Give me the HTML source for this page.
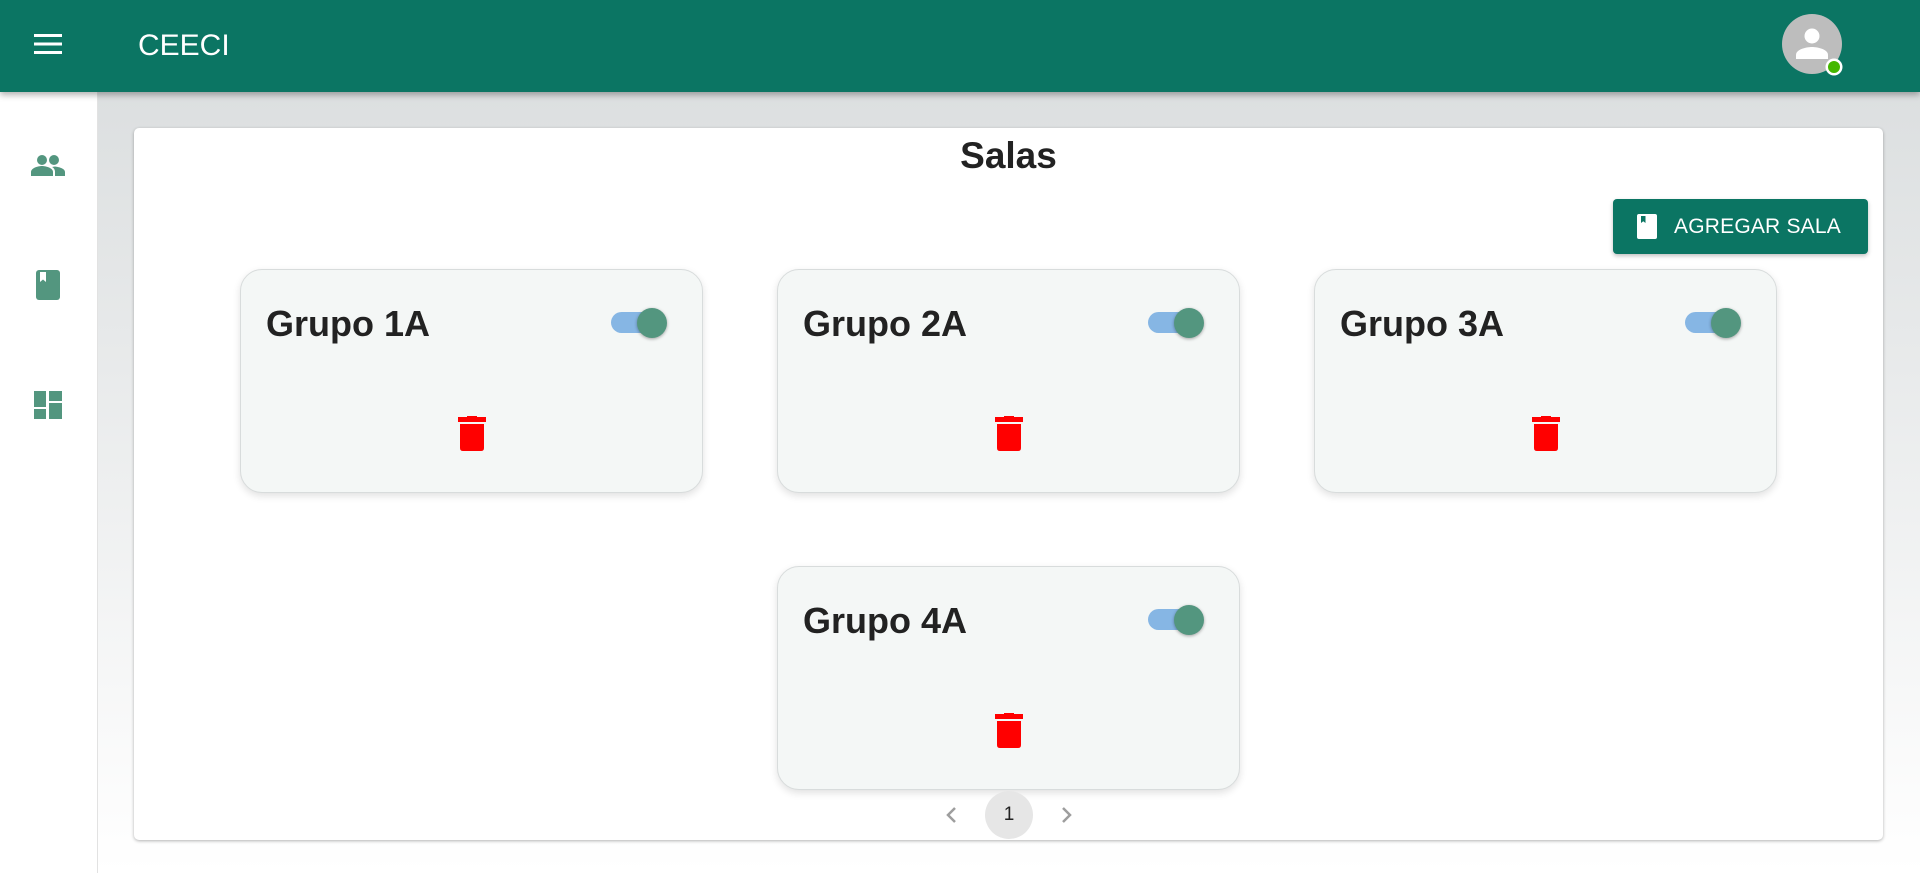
<!DOCTYPE html>
<html><head><meta charset="utf-8">
<style>
*{margin:0;padding:0;box-sizing:border-box}
body{width:1920px;height:873px;overflow:hidden;font-family:"Liberation Sans",Arial,sans-serif;background:#fff;position:relative}
.header{position:absolute;left:0;top:0;width:1920px;height:92px;background:#0b7563;box-shadow:0 3px 6px rgba(0,0,0,.3);z-index:5}
.title{position:absolute;left:138px;top:29px;color:#fff;font-size:30px}
.side{position:absolute;left:0;top:92px;width:98px;height:781px;background:#fff;border-right:1px solid #e2e2e2}
.main{position:absolute;left:98px;top:92px;width:1822px;height:781px;background:linear-gradient(#dcdfe0,#ffffff)}
.paper{position:absolute;left:134px;top:128px;width:1749px;height:712px;background:#fff;border-radius:5px;box-shadow:0 1px 3px rgba(0,0,0,.3)}
.h{position:absolute;left:0;width:100%;top:7px;text-align:center;font-size:37px;font-weight:bold;color:#222}
.btn{position:absolute;left:1479px;top:71px;width:255px;height:55px;background:#0b7563;border-radius:4px;color:#fff;font-size:21px;box-shadow:0 2px 4px rgba(0,0,0,.25)}
.btn span{position:absolute;left:61px;top:16px;letter-spacing:.2px}
.card{position:absolute;width:463px;height:224px;background:#f4f7f6;border:1px solid #d8dcdc;border-radius:22px;box-shadow:0 3px 8px rgba(0,0,0,.12)}
.card .t{position:absolute;left:25px;top:33px;font-size:36px;font-weight:bold;color:#222}
.tr{position:absolute;left:370px;top:42px;width:46px;height:21px;border-radius:11px;background:#86b6e4}
.th{position:absolute;left:396px;top:38px;width:30px;height:30px;border-radius:50%;background:#53967f;box-shadow:0 1px 3px rgba(0,0,0,.35)}
.trash{position:absolute;left:217px;top:146px}
</style></head><body>
<div class="header">
  <svg style="position:absolute;left:34px;top:34px" width="28" height="20"><rect x="0" y="0" width="28" height="3" fill="#fff"/><rect x="0" y="8.5" width="28" height="3" fill="#fff"/><rect x="0" y="17" width="28" height="3" fill="#fff"/></svg>
  <div class="title">CEECI</div>
  <svg style="position:absolute;left:1780px;top:13px" width="70" height="70">
    <circle cx="32" cy="31" r="30" fill="#bdbdbd"/>
    <circle cx="32" cy="23" r="7.5" fill="#fff"/>
    <path d="M16 46 V42 C16 36 27 34 32 34 C37 34 48 36 48 42 V46 Z" fill="#fff"/>
    <circle cx="54" cy="54" r="8.5" fill="#fff"/>
    <circle cx="54" cy="54" r="6" fill="#44b700"/>
  </svg>
</div>
<div class="side">
  <svg style="position:absolute;left:31px;top:62px" width="34" height="22" viewBox="0 0 34 22"><circle cx="11" cy="6" r="5" fill="#53967f"/><circle cx="23" cy="6" r="5" fill="#53967f"/><path d="M0 22 V18 C0 14 7 12 11 12 C15 12 22 14 22 18 V22Z" fill="#53967f"/><path d="M24 12.5 C28 13 34 14.5 34 18 V22 H24 V18 C24 16 23 14 21 13 Z" fill="#53967f"/></svg>
  <svg style="position:absolute;left:36px;top:178px" width="24" height="30"><rect x="0" y="0" width="24" height="30" rx="3" fill="#53967f"/><path d="M4 2 H10 V12 L7 9.5 L4 12Z" fill="#fff"/></svg>
  <svg style="position:absolute;left:34px;top:299px" width="28" height="28"><rect x="0" y="0" width="12" height="16" fill="#53967f"/><rect x="0" y="18" width="12" height="10" fill="#53967f"/><rect x="15" y="0" width="13" height="10" fill="#53967f"/><rect x="15" y="12" width="13" height="16" fill="#53967f"/></svg>
</div>
<div class="main"></div>
<div class="paper">
  <div class="h">Salas</div>
  <div class="btn">
    <svg style="position:absolute;left:24px;top:15px" width="20" height="25"><rect x="0" y="0" width="20" height="25" rx="2" fill="#fff"/><path d="M4 2 H8.5 V9 L6.25 7.2 L4 9Z" fill="#0b7563"/></svg>
    <span>AGREGAR SALA</span>
  </div>
</div>

<div class="card" style="left:240px;top:269px"><div class="t">Grupo 1A</div><div class="tr"></div><div class="th"></div>
<svg class="trash" width="28" height="36"><rect x="0" y="1" width="28" height="5" fill="#f00"/><rect x="9" y="0" width="10" height="3" fill="#f00"/><path d="M2 8 H26 V32 Q26 35 23 35 H5 Q2 35 2 32Z" fill="#f00"/></svg></div>
<div class="card" style="left:777px;top:269px"><div class="t">Grupo 2A</div><div class="tr"></div><div class="th"></div>
<svg class="trash" width="28" height="36"><rect x="0" y="1" width="28" height="5" fill="#f00"/><rect x="9" y="0" width="10" height="3" fill="#f00"/><path d="M2 8 H26 V32 Q26 35 23 35 H5 Q2 35 2 32Z" fill="#f00"/></svg></div>
<div class="card" style="left:1314px;top:269px"><div class="t">Grupo 3A</div><div class="tr"></div><div class="th"></div>
<svg class="trash" width="28" height="36"><rect x="0" y="1" width="28" height="5" fill="#f00"/><rect x="9" y="0" width="10" height="3" fill="#f00"/><path d="M2 8 H26 V32 Q26 35 23 35 H5 Q2 35 2 32Z" fill="#f00"/></svg></div>
<div class="card" style="left:777px;top:566px"><div class="t">Grupo 4A</div><div class="tr"></div><div class="th"></div>
<svg class="trash" width="28" height="36"><rect x="0" y="1" width="28" height="5" fill="#f00"/><rect x="9" y="0" width="10" height="3" fill="#f00"/><path d="M2 8 H26 V32 Q26 35 23 35 H5 Q2 35 2 32Z" fill="#f00"/></svg></div>

<svg style="position:absolute;left:945px;top:806px" width="14" height="18"><path d="M10 2 L3 9 L10 16" stroke="#9e9e9e" stroke-width="2.5" fill="none"/></svg>
<div style="position:absolute;left:985px;top:791px;width:48px;height:48px;border-radius:50%;background:#e6e6e6;text-align:center;line-height:48px;font-size:19px;color:#222">1</div>
<svg style="position:absolute;left:1059px;top:806px" width="14" height="18"><path d="M4 2 L11 9 L4 16" stroke="#9e9e9e" stroke-width="2.5" fill="none"/></svg>
</body></html>
